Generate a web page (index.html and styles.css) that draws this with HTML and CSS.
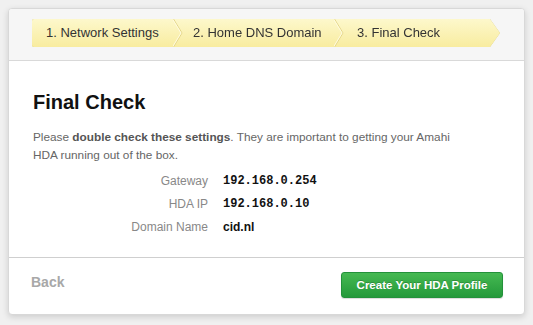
FILE: index.html
```html
<!DOCTYPE html>
<html lang="en">
<head>
    <meta charset="UTF-8">
    <title>Amahi Setup - Final Check</title>
    <link rel="stylesheet" href="styles.css">
</head>
<body>
    <div class="wizard">
        <!-- step trail -->
        <div class="wizard-header">
            <div class="steps-wrap">
                <ol class="steps">
                    <li class="step step-1">1. Network Settings</li>
                    <li class="step-sep"><svg width="10" height="28" viewBox="0 0 10 28"><polyline points="0.5,0 9,14 0.5,28" fill="none" stroke="#e3d58a" stroke-width="1"/><polyline points="-0.5,0 8,14 -0.5,28" fill="none" stroke="#fffbe0" stroke-width="1"/></svg></li>
                    <li class="step step-2">2. Home DNS Domain</li>
                    <li class="step-sep"><svg width="10" height="28" viewBox="0 0 10 28"><polyline points="0.5,0 9,14 0.5,28" fill="none" stroke="#e3d58a" stroke-width="1"/><polyline points="-0.5,0 8,14 -0.5,28" fill="none" stroke="#fffbe0" stroke-width="1"/></svg></li>
                    <li class="step step-3">3. Final Check</li>
                </ol>
            </div>
        </div>

        <div class="wizard-body">
            <h1>Final Check</h1>
            <p class="intro">Please <strong>double check these settings</strong>. They are important to getting your Amahi HDA running out of the box.</p>

            <div class="settings">
                <span class="label">Gateway</span><span class="value mono">192.168.0.254</span>
                <span class="label">HDA IP</span><span class="value mono">192.168.0.10</span>
                <span class="label">Domain Name</span><span class="value">cid.nl</span>
            </div>
        </div>

        <div class="wizard-footer">
            <a class="back-link" href="#">Back</a>
            <button class="create-btn">Create Your HDA Profile</button>
        </div>
    </div>
</body>
</html>
```

FILE: styles.css
```css
* {
    margin: 0;
    padding: 0;
    box-sizing: border-box;
}

body {
    background-color: #f0f0f0;
    padding: 8px;
    font-family: 'Liberation Sans', Arial, sans-serif;
    color: #333;
}

.wizard {
    width: 517px;
    height: 307px;
    background: #fff;
    border: 1px solid #d8d8d8;
    border-radius: 4px;
    box-shadow: 0 2px 6px rgba(0, 0, 0, 0.15);
    display: flex;
    flex-direction: column;
    overflow: hidden;
}

.wizard-header {
    height: 52px;
    flex-shrink: 0;
    background-color: #f6f6f6;
    border-bottom: 1px solid #d9d9d9;
    padding: 10px 0 0 23px;
}

.steps-wrap {
    filter: drop-shadow(0 0 0.6px #cfc27a);
    width: 469px;
}

.steps {
    list-style: none;
    display: flex;
    height: 28px;
    background: linear-gradient(#fdf8cc, #f8ec9f);
    clip-path: polygon(0 0, 458px 0, 468px 14px, 458px 28px, 0 28px);
    border-radius: 2px 0 0 2px;
}

.step {
    font-size: 13px;
    line-height: 28px;
    color: #333;
    white-space: nowrap;
}

.step-1 {
    width: 141px;
    padding-left: 14px;
}

.step-2 {
    width: 151px;
    padding-left: 10px;
}

.step-3 {
    padding-left: 13px;
}

.step-sep {
    width: 10px;
    height: 28px;
    flex-shrink: 0;
}

.step-sep svg {
    display: block;
}

.wizard-body {
    flex: 1;
    padding: 29px 24px 0 24px;
}

h1 {
    font-size: 20px;
    line-height: 24px;
    font-weight: bold;
    color: #111;
    margin-bottom: 14px;
}

.intro {
    font-size: 11.8px;
    line-height: 18px;
    color: #666;
    width: 440px;
}

.intro strong {
    color: #555;
}

.settings {
    display: grid;
    grid-template-columns: 175px auto;
    column-gap: 15px;
    margin-top: 6px;
    font-size: 12px;
    line-height: 23px;
}

.label {
    text-align: right;
    color: #888;
}

.value {
    font-weight: bold;
    color: #111;
}

.mono {
    font-family: 'Liberation Mono', 'Courier New', monospace;
}

.wizard-footer {
    height: 57px;
    flex-shrink: 0;
    border-top: 1px solid #cfcfcf;
    display: flex;
    justify-content: space-between;
    align-items: flex-start;
    padding: 14px 21px 0 22px;
}

.back-link {
    font-size: 14px;
    font-weight: bold;
    color: #a8a8a8;
    text-decoration: none;
    line-height: 18px;
    margin-top: 1px;
}

.create-btn {
    width: 162px;
    height: 26px;
    border: 1px solid #23913a;
    border-radius: 3px;
    background: linear-gradient(#45b952, #24993a);
    color: #fff;
    font-family: 'Liberation Sans', Arial, sans-serif;
    font-size: 11.5px;
    font-weight: bold;
    text-shadow: 0 -1px 0 rgba(0, 0, 0, 0.2);
    box-shadow: 0 1px 1px rgba(0, 0, 0, 0.15);
    cursor: pointer;
}
```
